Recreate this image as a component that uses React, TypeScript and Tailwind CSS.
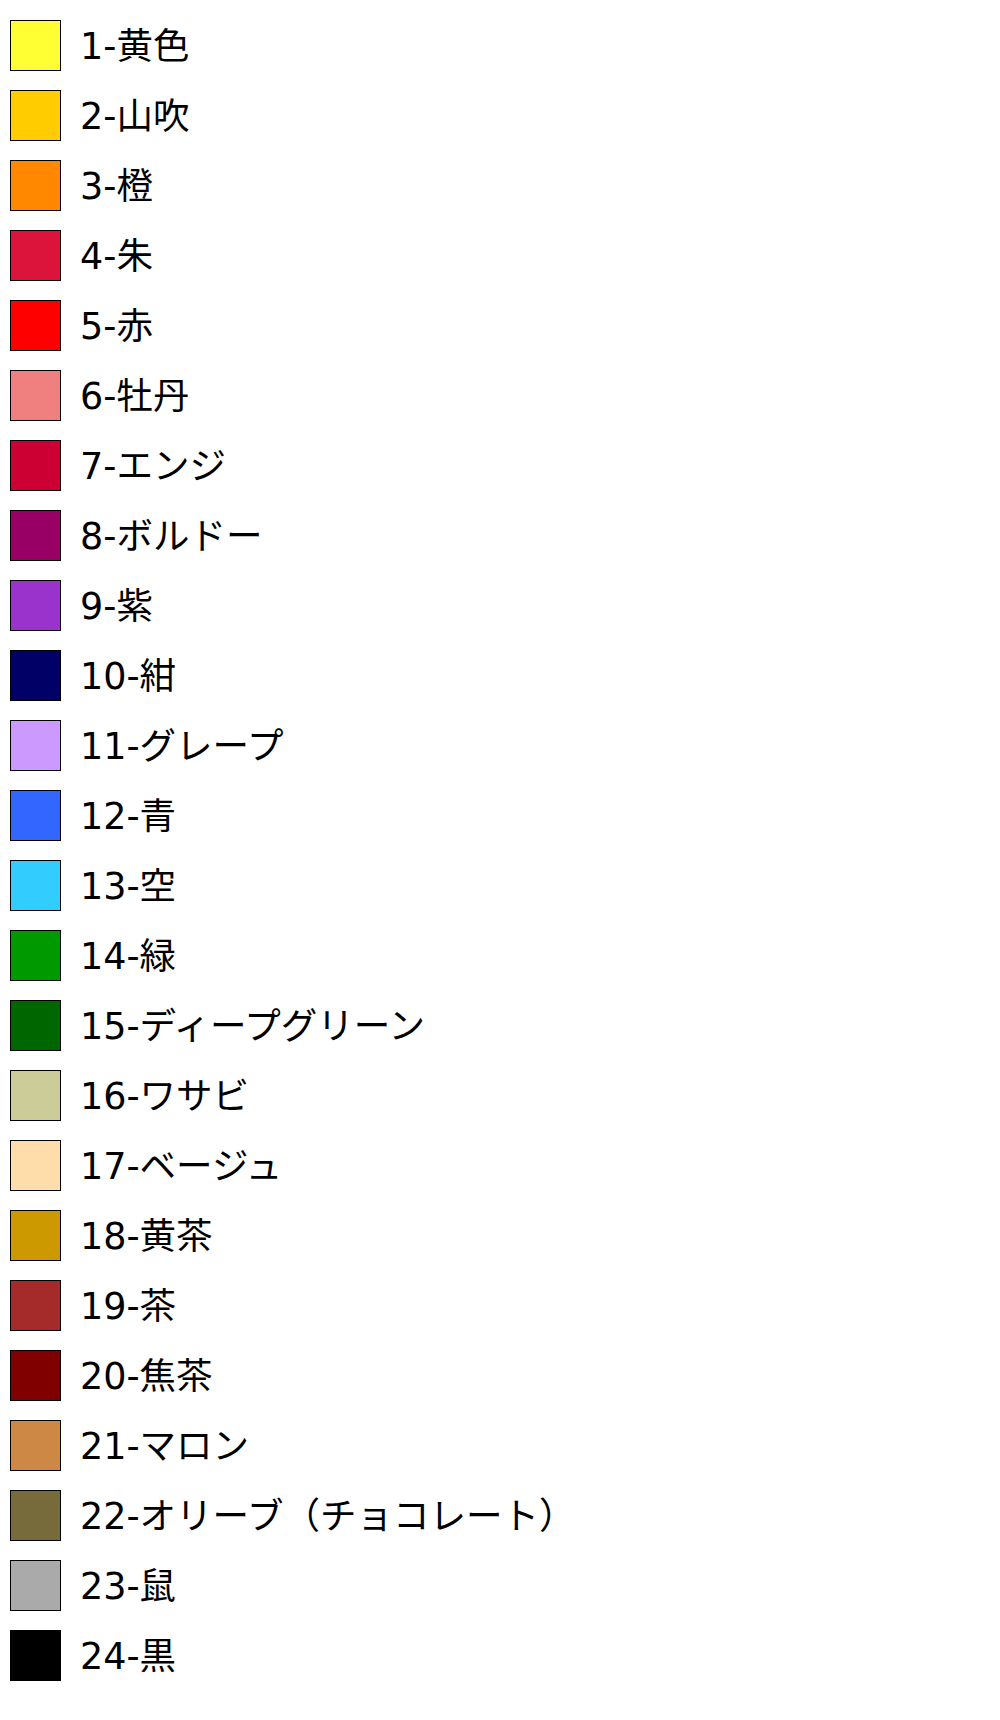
import React from "react";

const items: [string, string][] = [
  ["1-黄色", "#FFFF33"],
  ["2-山吹", "#FFCC00"],
  ["3-橙", "#FF8800"],
  ["4-朱", "#DC143C"],
  ["5-赤", "#FF0000"],
  ["6-牡丹", "#F08080"],
  ["7-エンジ", "#CC0033"],
  ["8-ボルドー", "#990066"],
  ["9-紫", "#9933CC"],
  ["10-紺", "#000066"],
  ["11-グレープ", "#CC99FF"],
  ["12-青", "#3366FF"],
  ["13-空", "#33CCFF"],
  ["14-緑", "#009900"],
  ["15-ディープグリーン", "#006600"],
  ["16-ワサビ", "#CCCC99"],
  ["17-ベージュ", "#FFDDAA"],
  ["18-黄茶", "#CC9900"],
  ["19-茶", "#A52A2A"],
  ["20-焦茶", "#800000"],
  ["21-マロン", "#CC8844"],
  ["22-オリーブ（チョコレート）", "#776B3B"],
  ["23-鼠", "#AAAAAA"],
  ["24-黒", "#000000"],
];

export default function App() {
  return (
    <div
      className="bg-white w-[1000px] h-[1720px] pt-[20px] pl-[10px] flex flex-col gap-[19px] text-black"
      style={{ fontFamily: '"DejaVu Sans", "Noto Sans CJK JP", sans-serif' }}
    >
      {items.map(([label, color]) => (
        <div key={label} className="flex items-center h-[51px]">
          <div
            className="w-[51px] h-[51px] border border-black shrink-0"
            style={{ backgroundColor: color }}
          />
          <span className="ml-[19px] mt-[4px] text-[36.5px] leading-none">{label}</span>
        </div>
      ))}
    </div>
  );
}
